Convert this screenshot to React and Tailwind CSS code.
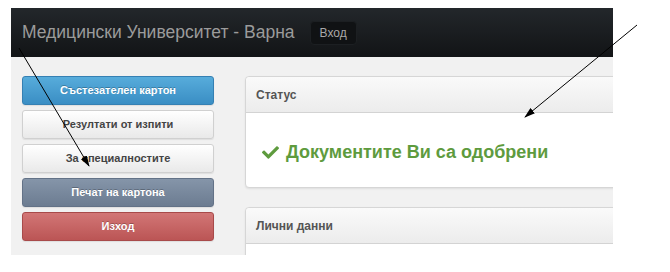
import React from 'react';
import { FaCheck } from 'react-icons/fa';

const font = { fontFamily: '"Liberation Sans", Arial, sans-serif' };

const SideButton = ({ label, tone }) => {
  const tones = {
    blue: 'bg-gradient-to-b from-[#57acdb] to-[#3a8ec4] border-[#3580b3] text-white [text-shadow:0_-1px_0_rgba(0,0,0,0.25)]',
    light: 'bg-gradient-to-b from-[#ffffff] to-[#e9e9e9] border-[#d0d0d0] text-[#444]',
    slate: 'bg-gradient-to-b from-[#8595a9] to-[#6c7c91] border-[#637287] text-white [text-shadow:0_-1px_0_rgba(0,0,0,0.25)]',
    red: 'bg-gradient-to-b from-[#d27676] to-[#bb5555] border-[#a84a4a] text-white [text-shadow:0_-1px_0_rgba(0,0,0,0.25)]',
  };
  return (
    <div
      className={`h-[29px] flex items-center justify-center rounded-[3px] border text-[11px] font-bold shadow-[0_1px_1px_rgba(0,0,0,0.08)] ${tones[tone]}`}
    >
      {label}
    </div>
  );
};

const Panel = ({ title, children, bodyClass }) => (
  <div className="w-[400px] rounded-[4px] border border-[#d6d6d6] bg-white shadow-[0_1px_2px_rgba(0,0,0,0.08)]">
    <div className="h-[36px] flex items-center pl-[10px] bg-gradient-to-b from-[#fafafa] to-[#ececec] border-b border-[#d3d3d3] rounded-t-[4px] text-[12px] font-bold text-[#555]">
      {title}
    </div>
    <div className={bodyClass}>{children}</div>
  </div>
);

export default function App() {
  return (
    <div className="relative w-[670px] h-[272px] bg-white overflow-hidden" style={font}>
      <div className="ml-[11px] mt-[8px] w-[602px] h-[247px] overflow-hidden flex flex-col">
        {/* navbar */}
        <div className="h-[49px] shrink-0 flex items-center pl-[11px] bg-gradient-to-b from-[#23272b] to-[#121416]">
          <span className="text-[17.5px] text-[#9b9b9b]">Медицински Университет - Варна</span>
          <div className="ml-[15px] h-[24px] px-[9px] flex items-center rounded-[4px] bg-[#101214] border border-[#1c1f22] text-[12px] text-[#a8a8a8]">
            Вход
          </div>
        </div>

        {/* content */}
        <div className="flex-1 flex bg-[#f1f1f1] pl-[11px] pt-[19px]">
          <div className="w-[192px] shrink-0 flex flex-col gap-[5px]">
            <SideButton label="Състезателен картон" tone="blue" />
            <SideButton label="Резултати от изпити" tone="light" />
            <SideButton label="За специалностите" tone="light" />
            <SideButton label="Печат на картона" tone="slate" />
            <SideButton label="Изход" tone="red" />
          </div>

          <div className="ml-[31px] flex flex-col gap-[19px]">
            <Panel title="Статус" bodyClass="h-[74px] flex items-center pl-[16px] pt-[4px]">
              <FaCheck className="text-[#5e9b3e] w-[17px] h-[17px]" />
              <span className="ml-[7px] text-[18px] font-bold text-[#5e9b3e]">Документите Ви са одобрени</span>
            </Panel>
            <Panel title="Лични данни" bodyClass="h-[40px]" />
          </div>
        </div>
      </div>

      {/* annotation arrows */}
      <svg className="absolute inset-0 pointer-events-none" width="670" height="272">
        <defs>
          <marker id="ah" markerWidth="11" markerHeight="7" refX="10" refY="3.5" orient="auto" markerUnits="userSpaceOnUse">
            <path d="M0,0 L11,3.5 L0,7 Z" fill="#000" />
          </marker>
        </defs>
        <line x1="19" y1="48" x2="89" y2="166" stroke="#000" strokeWidth="1" markerEnd="url(#ah)" />
        <line x1="637" y1="25" x2="525" y2="117" stroke="#000" strokeWidth="1" markerEnd="url(#ah)" />
      </svg>
    </div>
  );
}
